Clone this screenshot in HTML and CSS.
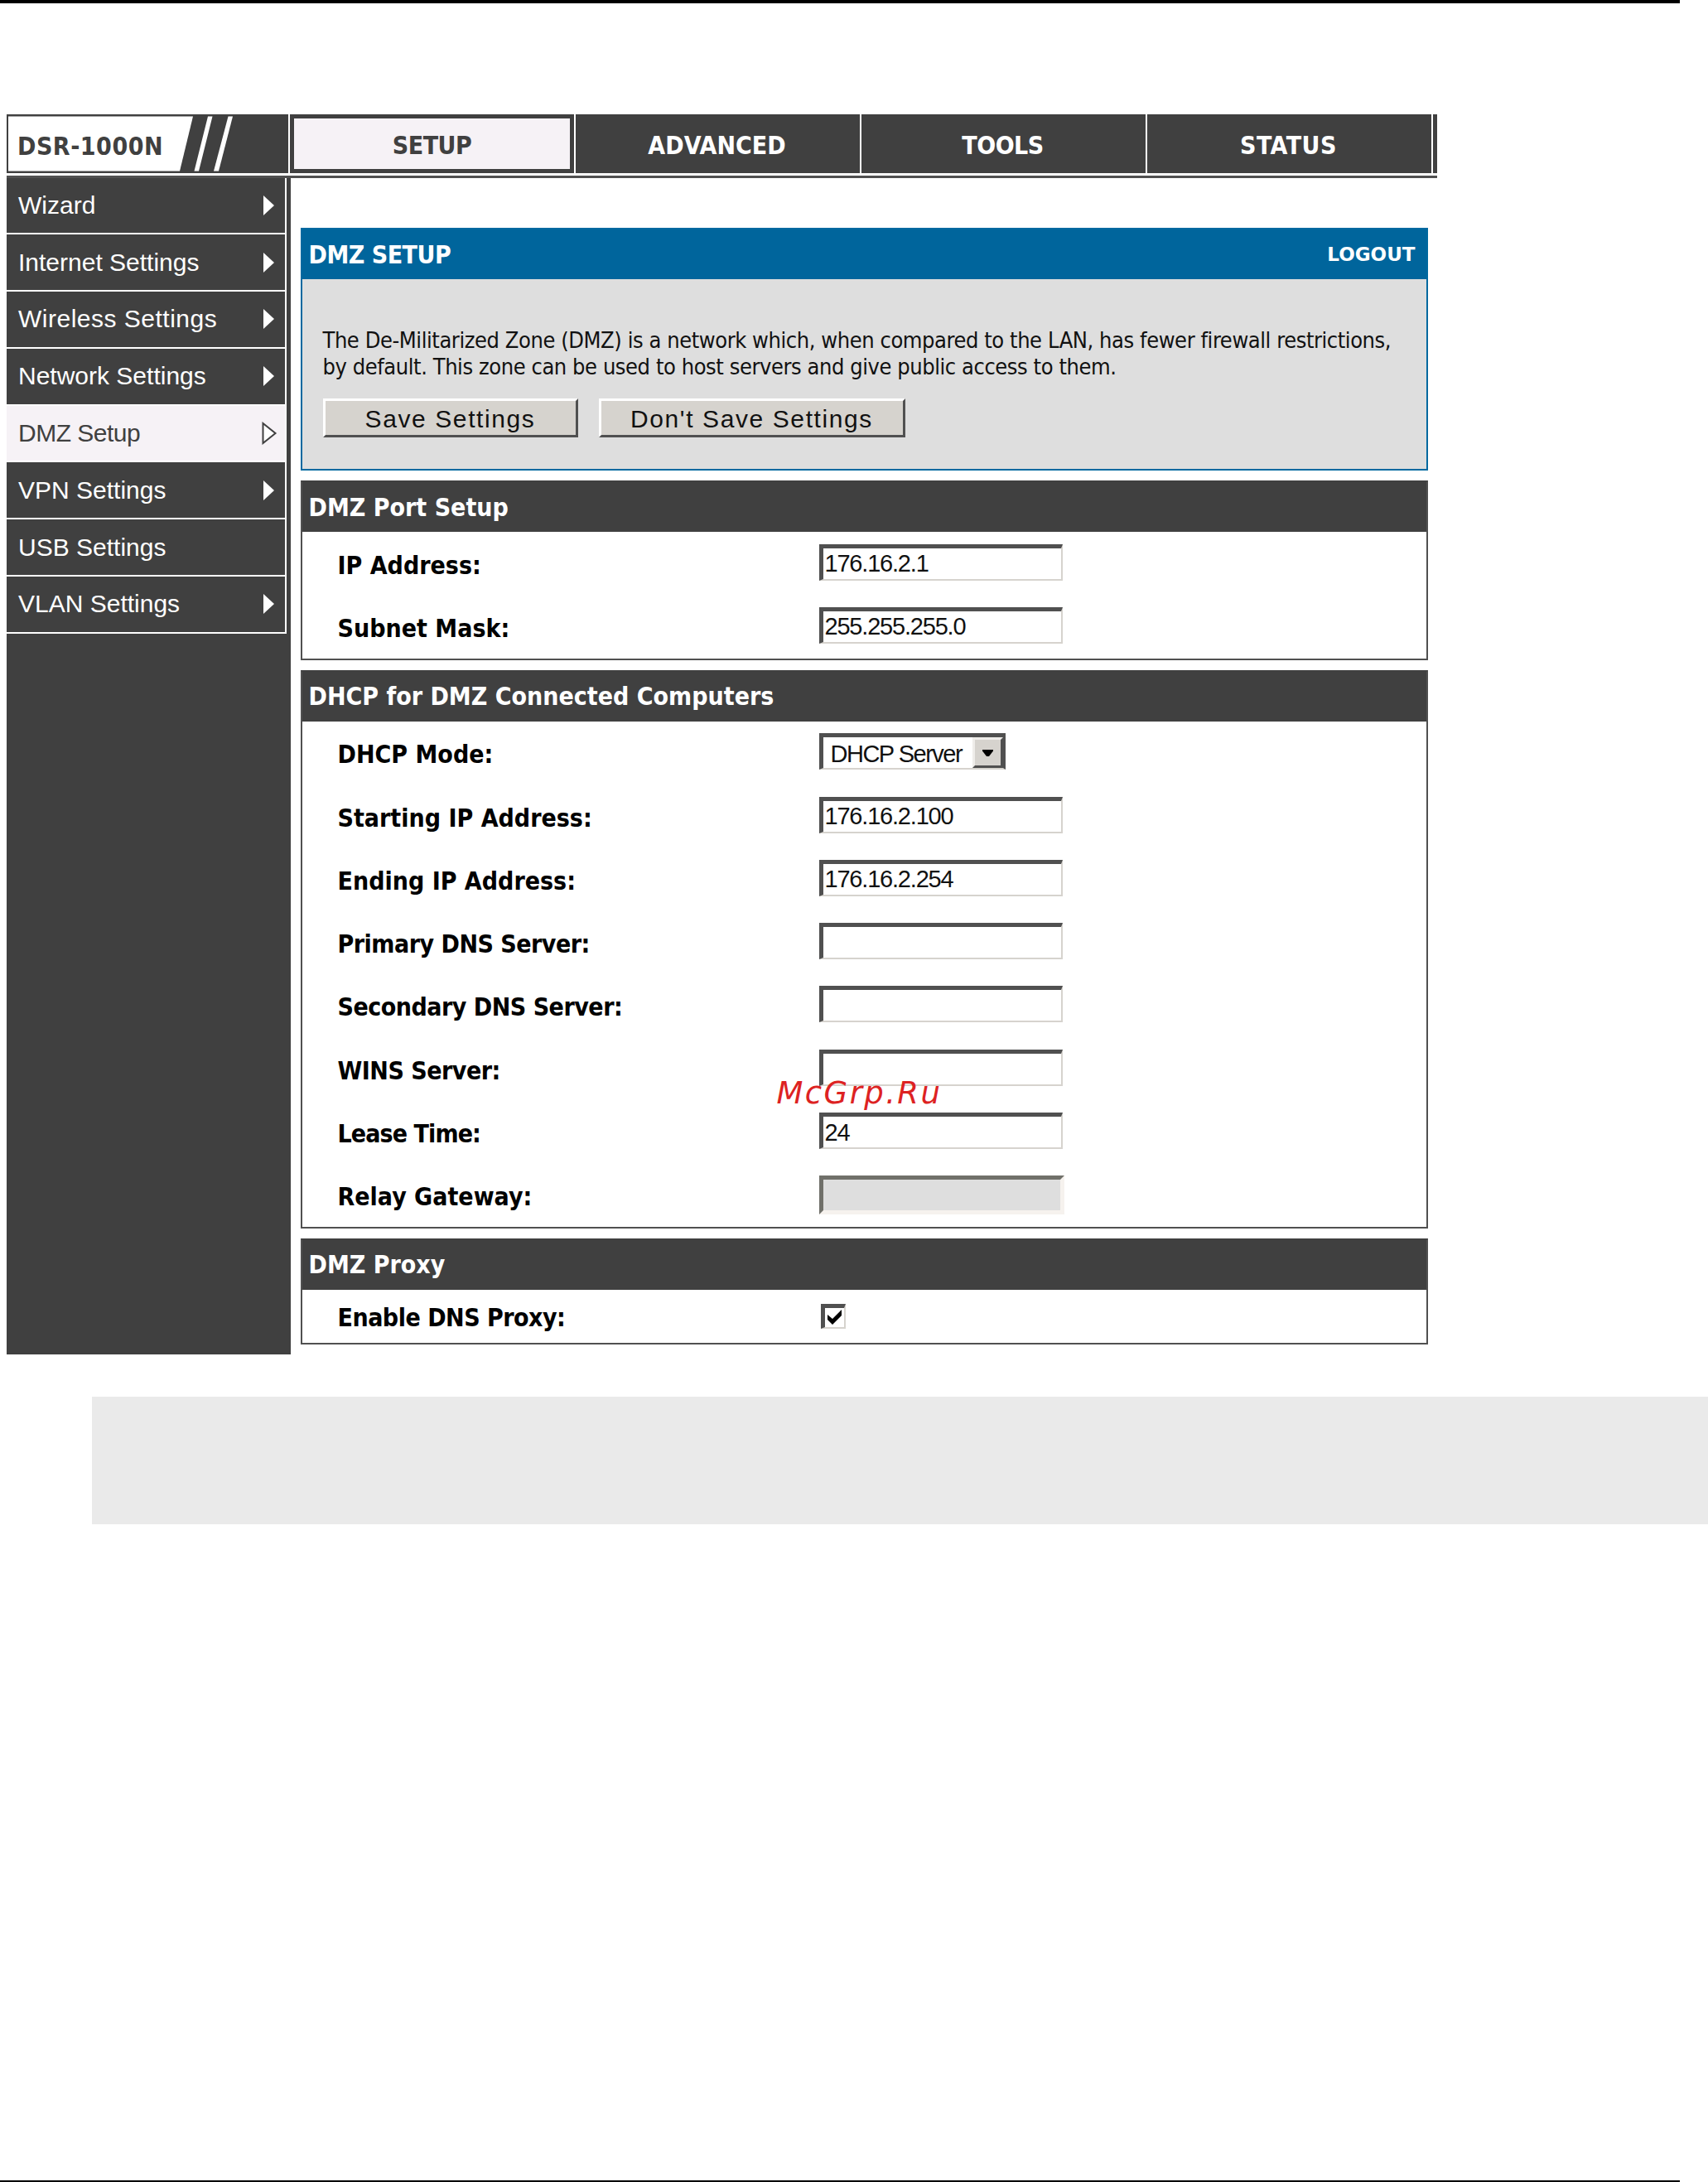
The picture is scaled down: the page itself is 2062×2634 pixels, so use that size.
FILE: index.html
```
<!DOCTYPE html>
<html lang="en">
<head>
    <meta charset="UTF-8">
    <title>DSR-1000N - DMZ Setup</title>
    <link rel="stylesheet" href="styles.css">
</head>
<body>
    <div class="page">
        <div class="app">
            <div class="topbar">
                <div class="logo">
                    <svg class="logo-bg" width="340" height="72" viewBox="0 0 340 72">
                        <path d="M2 2.5H225L209 68.5H2Z" fill="#fff"/>
                        <path d="M243 2.5H248.5L232 68.5H226.5Z" fill="#fff"/>
                        <path d="M267.5 2.5H273L256 68.5H250Z" fill="#fff"/>
                    </svg>
                    <span class="logo-name">DSR-1000N</span>
                </div>
                <div class="tab active"><span class="tight">SETUP</span></div>
                <div class="tab">ADVANCED</div>
                <div class="tab"><span class="tight">TOOLS</span></div>
                <div class="tab"><span class="wide">STATUS</span></div>
                <div class="tab-end"></div>
            </div>

            <div class="main">
                <div class="sidebar">
                    <div class="menu">
                        <div class="menu-item">
                            <span>Wizard</span>
                            <svg class="arrow" width="14" height="26" viewBox="0 0 14 26"><path d="M1 1L14 13L1 25Z" fill="#fff"/></svg>
                        </div>
                        <div class="menu-item">
                            <span>Internet Settings</span>
                            <svg class="arrow" width="14" height="26" viewBox="0 0 14 26"><path d="M1 1L14 13L1 25Z" fill="#fff"/></svg>
                        </div>
                        <div class="menu-item">
                            <span class="wide">Wireless Settings</span>
                            <svg class="arrow" width="14" height="26" viewBox="0 0 14 26"><path d="M1 1L14 13L1 25Z" fill="#fff"/></svg>
                        </div>
                        <div class="menu-item">
                            <span>Network Settings</span>
                            <svg class="arrow" width="14" height="26" viewBox="0 0 14 26"><path d="M1 1L14 13L1 25Z" fill="#fff"/></svg>
                        </div>
                        <div class="menu-item active">
                            <span class="tight">DMZ Setup</span>
                            <svg class="arrow" width="19" height="28" viewBox="0 0 19 28"><path d="M1.5 2V26L16.5 14Z" fill="#fff" stroke="#404040" stroke-width="2"/></svg>
                        </div>
                        <div class="menu-item">
                            <span>VPN Settings</span>
                            <svg class="arrow" width="14" height="26" viewBox="0 0 14 26"><path d="M1 1L14 13L1 25Z" fill="#fff"/></svg>
                        </div>
                        <div class="menu-item">
                            <span>USB Settings</span>
                        </div>
                        <div class="menu-item">
                            <span>VLAN Settings</span>
                            <svg class="arrow" width="14" height="26" viewBox="0 0 14 26"><path d="M1 1L14 13L1 25Z" fill="#fff"/></svg>
                        </div>
                    </div>
                </div>

                <div class="content">
                    <div class="panel intro">
                        <div class="panel-head">
                            <span class="tight">DMZ SETUP</span>
                            <span class="logout">LOGOUT</span>
                        </div>
                        <div class="intro-body">
                            <p>The De-Militarized Zone (DMZ) is a network which, when compared to the LAN, has fewer firewall restrictions,<br>by default. This zone can be used to host servers and give public access to them.</p>
                            <div class="buttons">
                                <button class="btn save">Save Settings</button>
                                <button class="btn cancel">Don't Save Settings</button>
                            </div>
                        </div>
                    </div>

                    <div class="panel">
                        <div class="panel-head"><span>DMZ Port Setup</span></div>
                        <div class="row">
                            <label>IP Address:</label>
                            <input type="text" value="176.16.2.1">
                        </div>
                        <div class="row">
                            <label>Subnet Mask:</label>
                            <input type="text" value="255.255.255.0">
                        </div>
                    </div>

                    <div class="panel">
                        <div class="panel-head"><span>DHCP for DMZ Connected Computers</span></div>
                        <div class="row">
                            <label>DHCP Mode:</label>
                            <div class="select">
                                <span>DHCP Server</span>
                                <div class="select-btn">
                                    <svg width="13" height="8" viewBox="0 0 13 8"><path d="M0 0H13V1.5L8 8H5L0 1.5Z" fill="#000"/></svg>
                                </div>
                            </div>
                        </div>
                        <div class="row">
                            <label>Starting IP Address:</label>
                            <input type="text" value="176.16.2.100">
                        </div>
                        <div class="row">
                            <label>Ending IP Address:</label>
                            <input type="text" value="176.16.2.254">
                        </div>
                        <div class="row">
                            <label class="tight">Primary DNS Server:</label>
                            <input type="text">
                        </div>
                        <div class="row">
                            <label class="tight">Secondary DNS Server:</label>
                            <input type="text">
                        </div>
                        <div class="row">
                            <label class="tight">WINS Server:</label>
                            <input type="text">
                            <div class="watermark">McGrp.Ru</div>
                        </div>
                        <div class="row">
                            <label class="tighter">Lease Time:</label>
                            <input type="text" value="24">
                        </div>
                        <div class="row">
                            <label>Relay Gateway:</label>
                            <input type="text" disabled>
                        </div>
                    </div>

                    <div class="panel">
                        <div class="panel-head"><span>DMZ Proxy</span></div>
                        <div class="row short">
                            <label class="tight">Enable DNS Proxy:</label>
                            <div class="checkbox">
                                <svg width="19" height="20" viewBox="0 0 19 20"><path d="M1 7L7 12L18 1V8L7 19L1 13Z" fill="#000"/></svg>
                            </div>
                        </div>
                    </div>
                </div>
            </div>
        </div>

        <div class="note"></div>
    </div>
</body>
</html>
```
FILE: styles.css
```
* {
    box-sizing: border-box;
}
body {
    margin: 0;
    background-color: #fff;
}
.page {
    height: 2634px;
    padding-top: 133.5px;
    border-top: 4px solid #000;
    border-bottom: 2px solid #000;
    border-image: linear-gradient(to right, #000 2028px, transparent 2028px) 4 0 2 0;
    overflow: hidden;
}
.app {
    width: 1727px;
    margin-left: 8px;
    font: bold 30px "DejaVu Sans Condensed", "DejaVu Sans", sans-serif;
}
.tight {
    letter-spacing: -0.5px;
}
.tighter {
    letter-spacing: -0.9px;
}
.wide {
    letter-spacing: 0.5px;
}

/* top navigation */
.topbar {
    display: flex;
    gap: 2px;
    height: 77px;
    padding-bottom: 2.5px;
    border-bottom: 3px solid #505050;
    color: #fff;
}
.logo {
    display: grid;
    align-items: center;
    width: 340px;
    background-color: #404040;
    color: #404040;
}
.logo-bg, .logo-name {
    grid-area: 1 / 1;
}
.logo-name {
    padding: 5px 0 0 13px;
    letter-spacing: 0.5px;
}
.tab {
    display: flex;
    align-items: center;
    justify-content: center;
    width: 343px;
    padding: 5px 2px 0 0;
    background-color: #404040;
}
.tab.active {
    padding: 0;
    border: 5px solid #404040;
    background-color: #f6f2f6;
    color: #404040;
}
.tab.active span {
    padding-top: 5px;
}
.tab-end {
    flex: 1;
    background-color: #404040;
}

/* layout */
.main {
    display: flex;
    height: 1420.5px;
}
.sidebar {
    width: 342.5px;
    background-color: #404040;
}
.menu {
    width: 338px;
    border-right: 2px solid #fff;
    font: 30px "Liberation Sans", Arial, sans-serif;
    color: #fff;
}
.menu-item {
    display: flex;
    align-items: center;
    justify-content: space-between;
    height: 68.8px;
    padding: 0 13px 0 14px;
    border-bottom: 2px solid #fff;
}
.menu-item.active {
    padding-right: 9px;
    background-color: #f6f2f6;
    color: #404040;
}
.content {
    width: 1361px;
    margin-left: 12px;
    padding-top: 60.5px;
}

/* panels */
.panel {
    margin-bottom: 12px;
    border: 2px solid #505050;
}
.panel-head {
    display: flex;
    align-items: center;
    justify-content: space-between;
    height: 60px;
    padding: 0 13px 0 8px;
    background-color: #404040;
    color: #fff;
}
.panel:not(.intro) {
    border-top-color: #404040;
}
.intro {
    height: 293px;
    border-color: #0069a0;
    background-color: #dedede;
}
.intro .panel-head {
    background-color: #00659c;
}
.logout {
    font: bold 23px "DejaVu Sans", sans-serif;
}
.intro-body {
    padding: 58px 0 0 25px;
}
.intro-body p {
    margin: 0;
    font-size: 27px;
    font-weight: normal;
    line-height: 32px;
    letter-spacing: -0.43px;
    white-space: nowrap;
    color: #111;
}
.buttons {
    display: flex;
    gap: 25px;
    margin-top: 22px;
}
.btn {
    height: 47px;
    padding: 2px 0 0;
    border: 3px solid;
    border-color: #fff #505050 #505050 #fff;
    border-radius: 0;
    background-color: #d6d3ce;
    color: #111;
    font: 30px "Liberation Sans", Arial, sans-serif;
    letter-spacing: 1.6px;
}
.save {
    width: 308px;
}
.cancel {
    width: 370px;
}

/* form rows */
.row {
    display: flex;
    align-items: center;
    position: relative;
    height: 76.3px;
    padding-left: 43px;
}
.row label {
    width: 581px;
    padding-top: 4px;
}
.row input, .select {
    width: 294px;
    height: 44px;
    margin-bottom: 3px;
    padding: 1px 0 0 2px;
    border: 2px solid;
    border-width: 5px 2px 2px 5px;
    border-color: #505050 #d6d3ce #d6d3ce #505050;
    border-radius: 0;
    background-color: #fff;
    color: #111;
    font: 29px "Liberation Sans", Arial, sans-serif;
    letter-spacing: -1.2px;
}
.row input:disabled {
    width: 296px;
    height: 47px;
    margin-bottom: 0;
    border-width: 5px;
    border-color: #70706a #f6f2ee #f6f2ee #70706a;
    background-color: #dedede;
}
.select {
    display: flex;
    align-items: center;
    justify-content: space-between;
    width: 225px;
    padding: 0 0 0 9px;
    border-right: 3px solid #505050;
    letter-spacing: -1.5px;
}
.select span {
    padding-top: 3px;
}
.select-btn {
    display: flex;
    align-items: center;
    justify-content: center;
    width: 37px;
    height: 37px;
    border: 3px solid;
    border-color: #efedea #505050 #505050 #efedea;
    background-color: #d6d3ce;
}
.row.short {
    height: 64.5px;
}
.row.short label {
    width: 583px;
    padding-top: 2px;
}
.checkbox {
    display: flex;
    align-items: center;
    justify-content: center;
    width: 30px;
    height: 30px;
    margin-bottom: 1px;
    border: 2px solid;
    border-width: 5px 2px 2px 5px;
    border-color: #505050 #d6d3ce #d6d3ce #505050;
}
.watermark {
    position: absolute;
    left: 573px;
    top: 46px;
    font: italic 37px "DejaVu Sans", sans-serif;
    letter-spacing: 2.4px;
    color: #d22;
}

.note {
    height: 154px;
    margin: 51px 0 0 111px;
    background-color: #eaeaea;
}
```
